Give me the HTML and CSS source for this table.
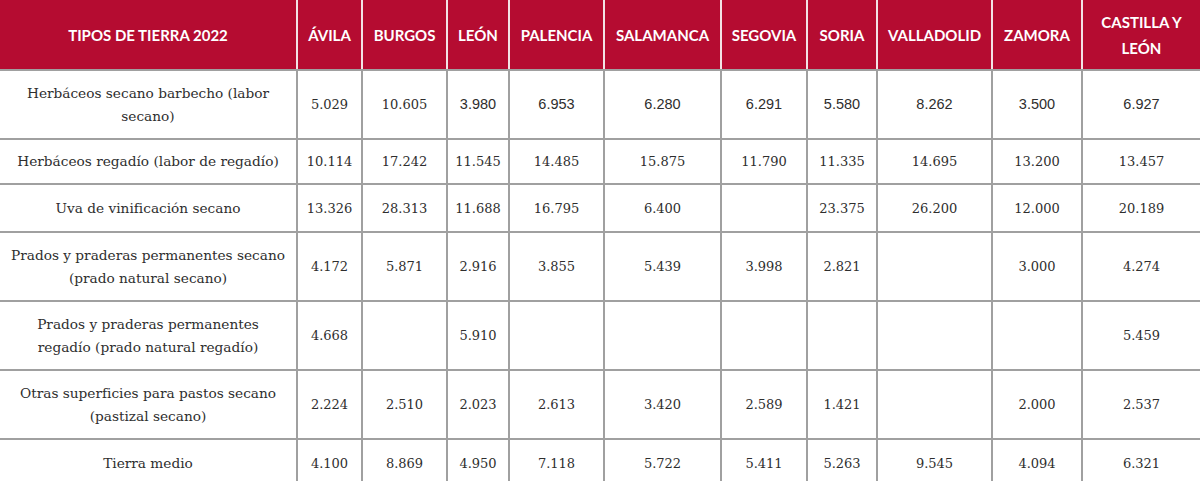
FILE: index.html
```html
<!DOCTYPE html>
<html lang="es">
<head>
<meta charset="utf-8">
<title>Tipos de tierra 2022</title>
<link rel="stylesheet" href="styles.css">
</head>
<body>
<table class="tabla">
  <colgroup>
    <col class="c-label"><col class="c-avila"><col class="c-burgos"><col class="c-leon"><col class="c-palencia"><col class="c-salamanca"><col class="c-segovia"><col class="c-soria"><col class="c-valladolid"><col class="c-zamora"><col class="c-cyl">
  </colgroup>
  <thead>
    <tr class="h-row">
      <th>TIPOS DE TIERRA 2022</th><th>ÁVILA</th><th>BURGOS</th><th>LEÓN</th><th>PALENCIA</th><th>SALAMANCA</th><th>SEGOVIA</th><th>SORIA</th><th>VALLADOLID</th><th>ZAMORA</th><th>CASTILLA Y LEÓN</th>
    </tr>
  </thead>
  <tbody>
    <tr class="r-tall">
      <td class="lbl">Herbáceos secano barbecho (labor secano)</td><td>5.029</td><td>10.605</td><td class="sans">3.980</td><td class="sans">6.953</td><td class="sans">6.280</td><td class="sans">6.291</td><td class="sans">5.580</td><td class="sans">8.262</td><td class="sans">3.500</td><td class="sans">6.927</td>
    </tr>
    <tr class="r-short">
      <td class="lbl">Herbáceos regadío (labor de regadío)</td><td>10.114</td><td>17.242</td><td>11.545</td><td>14.485</td><td>15.875</td><td>11.790</td><td>11.335</td><td>14.695</td><td>13.200</td><td>13.457</td>
    </tr>
    <tr class="r-mid">
      <td class="lbl">Uva de vinificación secano</td><td>13.326</td><td>28.313</td><td>11.688</td><td>16.795</td><td>6.400</td><td></td><td>23.375</td><td>26.200</td><td>12.000</td><td>20.189</td>
    </tr>
    <tr class="r-tall">
      <td class="lbl">Prados y praderas permanentes secano (prado natural secano)</td><td>4.172</td><td>5.871</td><td>2.916</td><td>3.855</td><td>5.439</td><td>3.998</td><td>2.821</td><td></td><td>3.000</td><td>4.274</td>
    </tr>
    <tr class="r-tall">
      <td class="lbl">Prados y praderas permanentes<br>regadío (prado natural regadío)</td><td>4.668</td><td></td><td>5.910</td><td></td><td></td><td></td><td></td><td></td><td></td><td>5.459</td>
    </tr>
    <tr class="r-tall">
      <td class="lbl">Otras superficies para pastos secano (pastizal secano)</td><td>2.224</td><td>2.510</td><td>2.023</td><td>2.613</td><td>3.420</td><td>2.589</td><td>1.421</td><td></td><td>2.000</td><td>2.537</td>
    </tr>
    <tr class="r-mid">
      <td class="lbl">Tierra medio</td><td>4.100</td><td>8.869</td><td>4.950</td><td>7.118</td><td>5.722</td><td>5.411</td><td>5.263</td><td>9.545</td><td>4.094</td><td>6.321</td>
    </tr>
  </tbody>
</table>
</body>
</html>
```
FILE: styles.css
```css
html, body {
  margin: 0;
  padding: 0;
  background: #ffffff;
}

.tabla {
  width: 1200px;
  table-layout: fixed;
  border-collapse: collapse;
  font-family: "DejaVu Serif", "Liberation Serif", serif;
  color: #2e2e2e;
}

.c-label { width: 297px; }
.c-avila { width: 65px; }
.c-burgos { width: 85px; }
.c-leon { width: 62px; }
.c-palencia { width: 95px; }
.c-salamanca { width: 117px; }
.c-segovia { width: 86px; }
.c-soria { width: 70px; }
.c-valladolid { width: 115px; }
.c-zamora { width: 90px; }
.c-cyl { width: 118px; }

.h-row th {
  height: 69px;
  padding: 0 4px;
  background: #b50c31;
  color: #ffffff;
  font-family: Lato, "Liberation Sans", sans-serif;
  font-weight: 700;
  font-size: 15px;
  line-height: 26px;
  text-align: center;
  border-left: 2px solid #f3e3e6;
  border-bottom: 2px solid #a0a0a0;
}

.h-row th:first-child {
  border-left: none;
}

td {
  padding: 0 4px;
  text-align: center;
  vertical-align: middle;
  font-size: 13px;
  line-height: 23px;
  border: 2px solid #a0a0a0;
}

td:first-child {
  border-left: none;
}

td:last-child {
  border-right: none;
}

.lbl {
  font-size: 13.7px;
  padding: 0 8px;
}

.sans {
  font-family: "Liberation Sans", Arial, sans-serif;
  font-size: 14.5px;
}

.r-tall td { height: 67px; }
.r-short td { height: 43px; }
.r-mid td { height: 46px; }
```
